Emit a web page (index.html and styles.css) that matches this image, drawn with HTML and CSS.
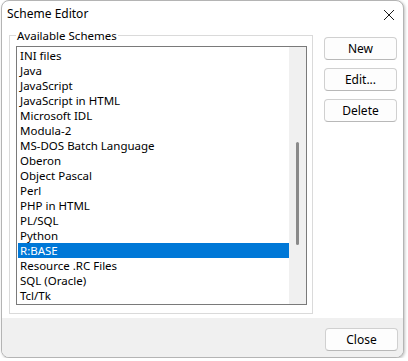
FILE: index.html
```html
<!DOCTYPE html>
<html lang="en">
<head>
    <meta charset="UTF-8">
    <title>Scheme Editor</title>
    <link rel="stylesheet" href="styles.css">
</head>
<body>
    <div class="window">
        <div class="titlebar">
            <span class="title">Scheme Editor</span>
            <svg class="close" width="12" height="12" viewBox="0 0 12 12">
                <path d="M1 1L11 11M11 1L1 11" stroke="#1a1a1a" stroke-width="1" fill="none"/>
            </svg>
        </div>

        <div class="content">
            <fieldset class="group">
                <legend>Available Schemes</legend>
                <div class="listbox">
                    <ul class="items">
                        <li>INI files</li>
                        <li>Java</li>
                        <li>JavaScript</li>
                        <li>JavaScript in HTML</li>
                        <li>Microsoft IDL</li>
                        <li>Modula-2</li>
                        <li>MS-DOS Batch Language</li>
                        <li>Oberon</li>
                        <li>Object Pascal</li>
                        <li>Perl</li>
                        <li>PHP in HTML</li>
                        <li>PL/SQL</li>
                        <li>Python</li>
                        <li class="selected">R:BASE</li>
                        <li>Resource .RC Files</li>
                        <li>SQL (Oracle)</li>
                        <li>Tcl/Tk</li>
                    </ul>
                    <div class="scrollbar"><div class="thumb"></div></div>
                </div>
            </fieldset>

            <div class="actions">
                <button>New</button>
                <button>Edit...</button>
                <button>Delete</button>
            </div>
        </div>

        <div class="footer">
            <button>Close</button>
        </div>
    </div>
</body>
</html>
```

FILE: styles.css
```css
body {
    margin: 0;
    background: #ffffff;
    font-family: "Noto Sans", "Open Sans", sans-serif;
    font-size: 11.5px;
    color: #000;
}
.window {
    width: 401px;
    height: 356px;
    margin-left: 1px;
    border: 1px solid #b4b4b4;
    border-radius: 8px;
    overflow: hidden;
    background: #fff;
    box-shadow: 1px 1px 3px rgba(0, 0, 0, 0.25);
    display: flex;
    flex-direction: column;
}
.titlebar {
    height: 26px;
    display: flex;
    align-items: center;
    justify-content: space-between;
    padding: 0 7px 0 5px;
}
.title {
    font-size: 12px;
    line-height: 16px;
}
.close {
    display: block;
    margin: 1px 1px 0 0;
}
.content {
    height: 291px;
    display: flex;
    align-items: flex-start;
    padding: 1px 0 0 7px;
    box-sizing: border-box;
}
.group {
    margin: 0;
    padding: 3px 5px 8px 6px;
    border: 1px solid #dadada;
}
.group legend {
    padding: 0 1px;
    margin-left: 0;
    line-height: 15px;
}
.listbox {
    display: flex;
    width: 289px;
    height: 257px;
    border: 1px solid #7a7a7a;
}
.items {
    list-style: none;
    margin: 0;
    padding: 1px 0 1px 1px;
    width: 271px;
}
.items li {
    height: 15px;
    line-height: 15px;
    padding-left: 2px;
    white-space: nowrap;
}
.items li.selected {
    background: #0078d7;
    color: #fff;
}
.scrollbar {
    width: 17px;
    background: #f0f0f0;
}
.thumb {
    width: 3px;
    height: 103px;
    margin: 95px 0 0 7px;
    background: #8a8a8a;
    border-radius: 2px;
}
.actions {
    display: flex;
    flex-direction: column;
    gap: 8px;
    margin: 9px 0 0 11px;
}
button {
    width: 73px;
    height: 23px;
    padding: 0;
    border: 1px solid #d0d0d0;
    border-bottom-color: #b8b8b8;
    border-radius: 4px;
    background: #fdfdfd;
    font-family: "Noto Sans", "Open Sans", sans-serif;
    font-size: 12px;
    color: #000;
}
.footer {
    height: 39px;
    background: #f0f0f0;
    display: flex;
    justify-content: flex-end;
    padding: 10px 5px 0 0;
    box-sizing: border-box;
}
```
